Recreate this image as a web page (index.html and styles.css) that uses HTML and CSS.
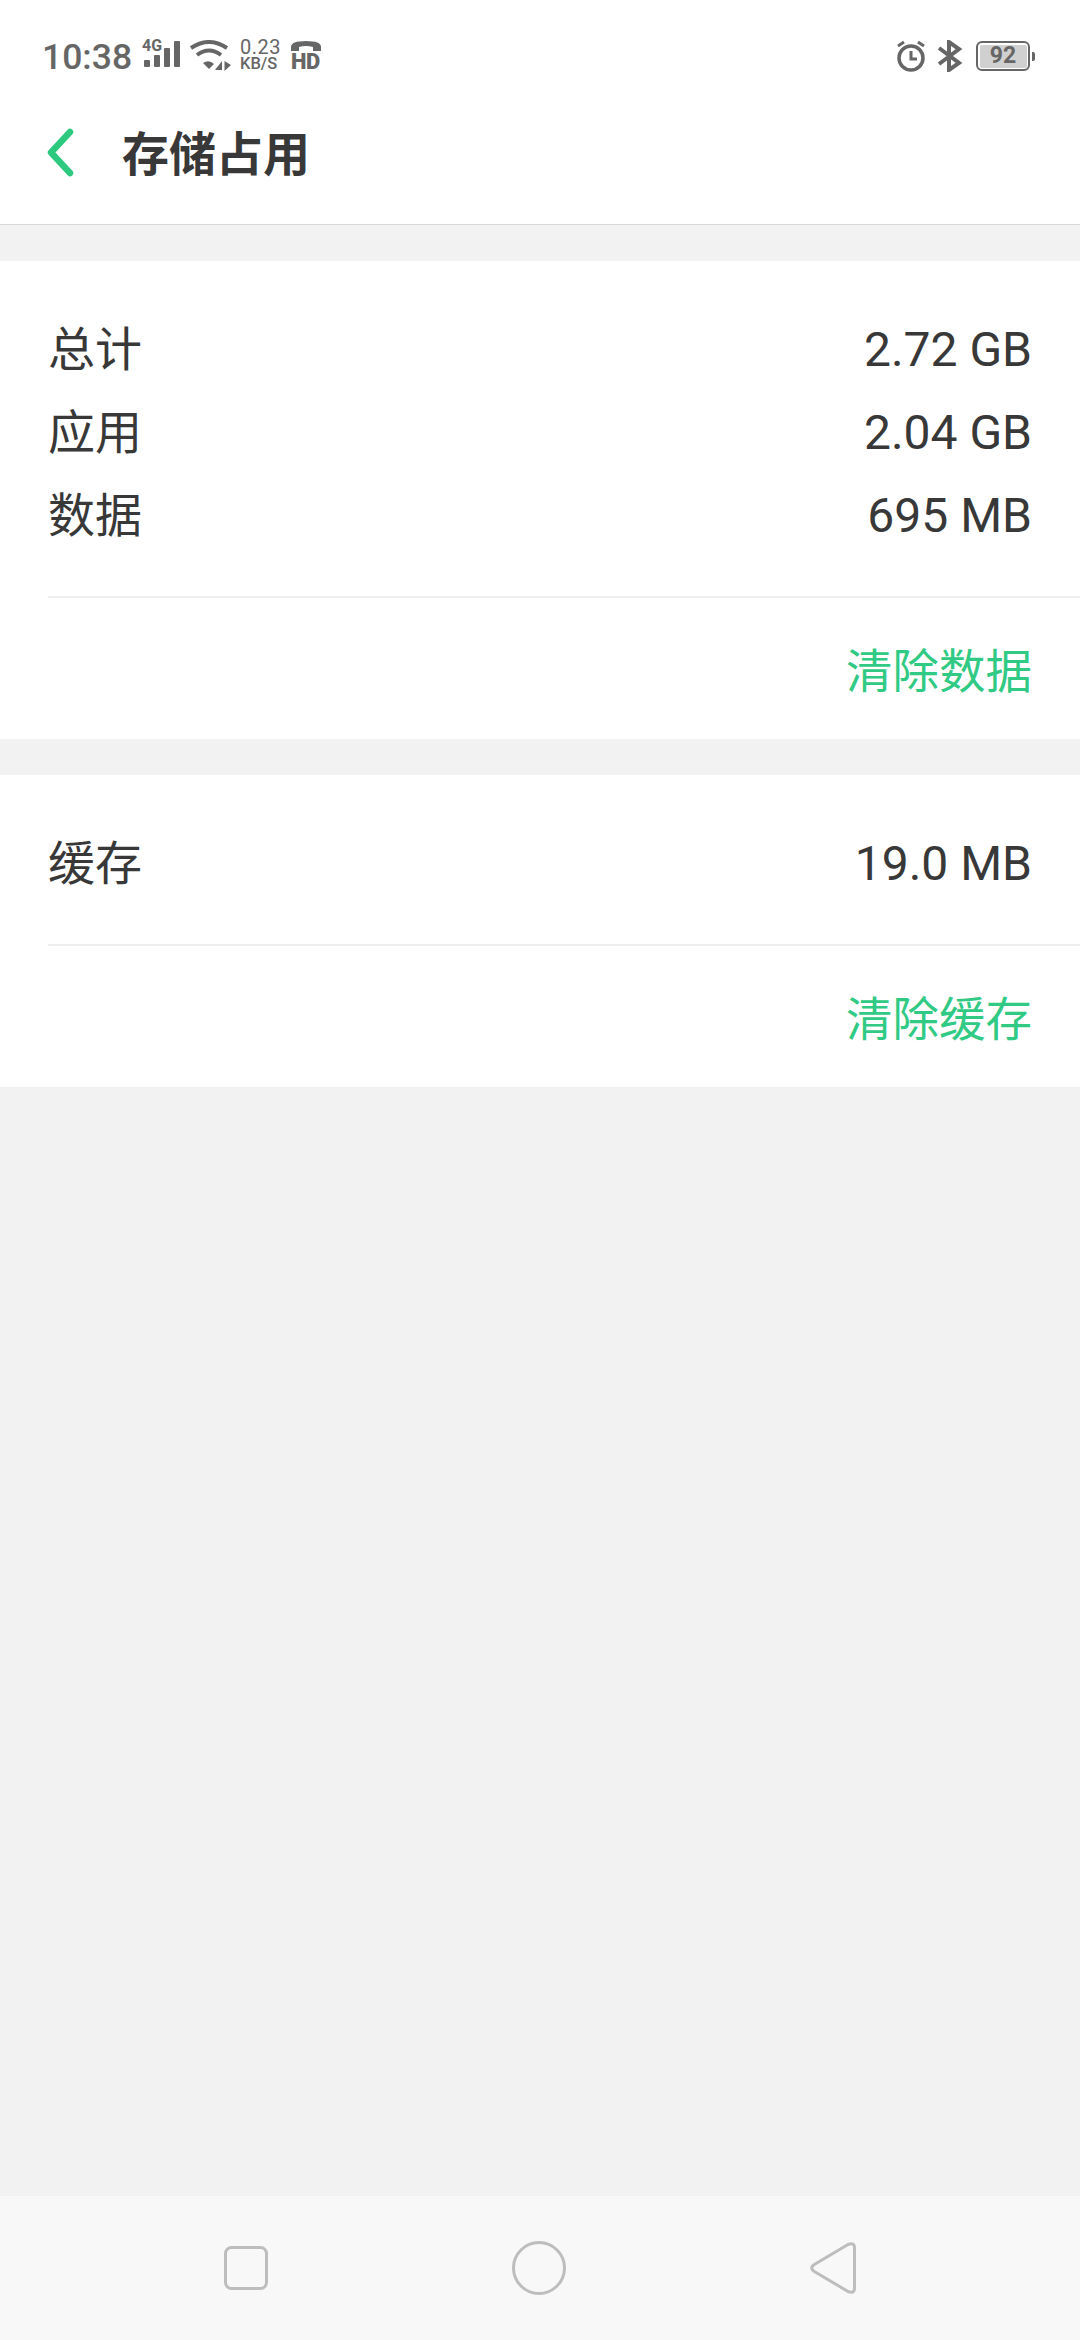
FILE: index.html
```html
<!DOCTYPE html>
<html lang="zh-CN">
<head>
    <meta charset="UTF-8">
    <title>存储占用</title>
    <link rel="stylesheet" href="styles.css">
</head>
<body>
    <div class="screen">
        <header class="top">
            <div class="status">
                <div class="status-left">
                    <span class="time">10:38</span>
                    <div class="signal">
                        <span class="net">4G</span>
                        <svg class="bars" width="36" height="28" viewBox="0 0 36 28" fill="#666">
                            <rect x="0" y="19" width="6" height="7" rx="1"/>
                            <rect x="10" y="14" width="6" height="12" rx="1"/>
                            <rect x="20" y="7" width="6" height="19" rx="1"/>
                            <rect x="30" y="0" width="6" height="26" rx="1"/>
                        </svg>
                    </div>
                    <svg class="wifi" width="42" height="32" viewBox="0 0 42 32" fill="none" stroke="#666" stroke-width="4">
                        <path d="M2 8 Q20 -4 38 8"/>
                        <path d="M8 15 Q20 6 32 15"/>
                        <path d="M14 23 L20 29 L25 24 Q20 19 14 23 Z" fill="#666" stroke="none"/>
                        <path d="M33 21 V30 H26 Z M35.500 21 V31 L42 25 Z" fill="#666" stroke="none"/>
                    </svg>
                    <div class="speed">
                        <span class="speed-num">0.23</span>
                        <span class="speed-unit">KB/S</span>
                    </div>
                    <div class="hd">
                        <svg width="30" height="12" viewBox="0 0 30 12" fill="#666">
                            <path d="M0 11 V7 Q0 1 15 1 Q30 1 30 7 V11 H22 V7 Q15 5 8 7 V11 Z"/>
                        </svg>
                        <span class="hd-text">HD</span>
                    </div>
                </div>
                <div class="status-right">
                    <svg class="alarm" width="30" height="32" viewBox="0 0 30 32" fill="none" stroke="#666" stroke-width="3.500">
                        <circle cx="15" cy="18" r="12"/>
                        <path d="M15 11 V19 H21" stroke-width="3"/>
                        <path d="M2 6 L8 2 M22 2 L28 6" stroke-width="3"/>
                    </svg>
                    <svg class="bt" width="26" height="32" viewBox="0 0 26 32" fill="none" stroke="#666" stroke-width="4">
                        <path d="M2 8 L22 23 L12 30 V2 L22 9 L2 24"/>
                    </svg>
                    <div class="battery">
                        <div class="battery-body"><span class="battery-num">92</span></div>
                        <span class="battery-tip"></span>
                    </div>
                </div>
            </div>
            <div class="title-row">
                <svg class="back" width="28" height="50" viewBox="0 0 28 50" fill="none" stroke="#2cc97f" stroke-width="6.500" stroke-linecap="round" stroke-linejoin="round">
                    <path d="M23 4 L4 24.500 L23 45"/>
                </svg>
                <h1 class="title">存储占用</h1>
            </div>
        </header>

        <section class="card">
            <div class="rows">
                <div class="row"><span class="label">总计</span><span class="value">2.72 GB</span></div>
                <div class="row"><span class="label">应用</span><span class="value">2.04 GB</span></div>
                <div class="row"><span class="label">数据</span><span class="value">695 MB</span></div>
            </div>
            <div class="action">清除数据</div>
        </section>

        <section class="card">
            <div class="rows rows-single">
                <div class="row"><span class="label">缓存</span><span class="value">19.0 MB</span></div>
            </div>
            <div class="action">清除缓存</div>
        </section>

        <div class="spacer"></div>

        <nav class="navbar">
            <svg width="44" height="44" viewBox="0 0 44 44" fill="none" stroke="#bdbdbd" stroke-width="3">
                <rect x="1.500" y="1.500" width="41" height="41" rx="6"/>
            </svg>
            <svg width="54" height="54" viewBox="0 0 54 54" fill="none" stroke="#bdbdbd" stroke-width="3">
                <circle cx="27" cy="27" r="25.500"/>
            </svg>
            <svg width="46" height="52" viewBox="0 0 46 52" fill="none" stroke="#bdbdbd" stroke-width="3" stroke-linejoin="round">
                <path d="M38 2.500 Q44.500 0 44.500 6 V46 Q44.500 52 38 49.500 L3.500 29 Q0 26 3.500 23 Z"/>
            </svg>
        </nav>
    </div>
</body>
</html>
```

FILE: styles.css
```css
* {
    box-sizing: border-box;
}
body {
    margin: 0;
    background: #f2f2f2;
    font-family: Roboto, "Noto Sans CJK SC", sans-serif;
    color: #383838;
}
.screen {
    width: 1080px;
    height: 2340px;
    display: flex;
    flex-direction: column;
}

/* header */
.top {
    height: 225px;
    background: #fff;
    border-bottom: 1px solid #d8d8d8;
    margin-bottom: 36px;
}
.status {
    height: 72px;
    padding: 40px 45px 0 42px;
    display: flex;
    justify-content: space-between;
    align-items: flex-start;
    color: #666;
}
.status-left {
    display: flex;
    align-items: flex-start;
}
.time {
    font-size: 35.500px;
    font-weight: 500;
    line-height: 34px;
    width: 102px;
    white-space: nowrap;
}
.signal {
    position: relative;
    width: 45px;
    height: 30px;
}
.bars {
    display: block;
    margin-top: 1px;
}
.net {
    position: absolute;
    left: -2px;
    top: -2px;
    font-size: 16px;
    font-weight: 700;
    line-height: 16px;
}
.wifi {
    display: block;
    margin-right: 9px;
}
.speed {
    width: 51px;
    display: flex;
    flex-direction: column;
    line-height: 15px;
}
.speed-num {
    font-size: 20px;
    letter-spacing: 0.5px;
}
.speed-unit {
    font-size: 16.500px;
    font-weight: 500;
    margin-top: 1px;
    white-space: nowrap;
}
.hd {
    display: flex;
    flex-direction: column;
    width: 30px;
}
.hd svg {
    display: block;
}
.hd-text {
    font-size: 22px;
    font-weight: 900;
    line-height: 20px;
    letter-spacing: -0.5px;
}
.status-right {
    display: flex;
    align-items: flex-start;
}
.alarm {
    margin-right: 11px;
}
.bt {
    margin-right: 13px;
}
.battery {
    display: flex;
    align-items: center;
    gap: 2px;
    margin-top: 1px;
}
.battery-body {
    width: 54px;
    height: 30px;
    border: 2.500px solid #666;
    border-radius: 6px;
    padding: 1.500px;
    display: flex;
}
.battery-num {
    flex: 1;
    background: #d0d0d0;
    border-radius: 2px;
    font-size: 23px;
    font-weight: 700;
    line-height: 22px;
    text-align: center;
}
.battery-tip {
    width: 3px;
    height: 9px;
    background: #666;
    border-radius: 0 2px 2px 0;
}
.title-row {
    height: 152px;
    padding: 13px 0 0 47px;
    display: flex;
    align-items: center;
}
.back {
    display: block;
    margin: 0 47px 4px 0;
}
.title {
    margin: 0;
    font-size: 47px;
    font-weight: 700;
    line-height: 60px;
}

/* cards */
.card {
    background: #fff;
    margin-bottom: 36px;
}
.rows {
    margin-left: 48px;
    padding: 47px 48px 40px 0;
    border-bottom: 2px solid #eeeeee;
    height: 337px;
}
.rows-single {
    height: 171px;
}
.row {
    height: 83px;
    display: flex;
    justify-content: space-between;
    align-items: center;
    font-size: 47px;
}
.label {
    margin-top: -9px;
}
.value {
    font-size: 48px;
}
.action {
    height: 141px;
    padding: 0 48px 3px 0;
    display: flex;
    justify-content: flex-end;
    align-items: center;
    font-size: 46.500px;
    color: #31ca84;
}

.spacer {
    flex: 1;
    margin-top: -36px;
}
.navbar {
    height: 144px;
    background: #f8f8f8;
    padding: 0 224px;
    display: flex;
    justify-content: space-between;
    align-items: center;
}
```
